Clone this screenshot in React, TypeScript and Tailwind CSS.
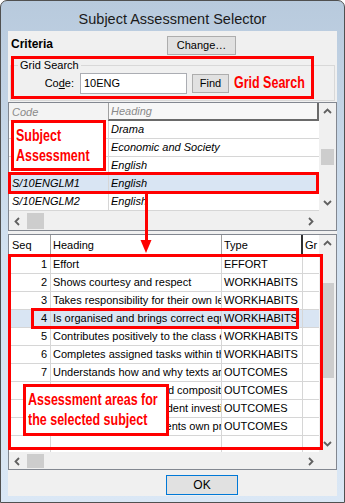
import React from "react";

type Dir = "up" | "down" | "left" | "right";
const Chev = ({ dir }: { dir: Dir }) => {
  const d = {
    up: "M1 6 L4.5 2.5 L8 6",
    down: "M1 3 L4.5 6.5 L8 3",
    left: "M6 1 L2.5 4.5 L6 8",
    right: "M3 1 L6.5 4.5 L3 8",
  }[dir];
  return (
    <svg width="9" height="9" viewBox="0 0 9 9">
      <path d={d} fill="none" stroke="#606060" strokeWidth="1.8" />
    </svg>
  );
};

const VScroll = ({ spacer, thumb }: { spacer: number; thumb: number }) => (
  <div className="w-[17px] flex flex-col bg-[#f0f0f0]">
    <div className="h-[17px] flex items-center justify-center">
      <Chev dir="up" />
    </div>
    <div style={{ height: spacer }} />
    <div className="mx-[2px] bg-[#cdcdcd]" style={{ height: thumb }} />
    <div className="flex-1" />
    <div className="h-[17px] flex items-center justify-center">
      <Chev dir="down" />
    </div>
  </div>
);

const HScroll = ({ h }: { h: number }) => (
  <div className="flex" style={{ height: h }}>
    <div className="w-[310px] flex bg-[#f0f0f0] border-t border-[#f0f0f0]">
      <div className="w-[17px] flex items-center justify-center">
        <Chev dir="left" />
      </div>
      <div className="w-[17px] my-[1px] ml-[1px] bg-[#cdcdcd]" />
      <div className="flex-1" />
      <div className="w-[17px] flex items-center justify-center">
        <Chev dir="right" />
      </div>
    </div>
    <div className="w-[17px] bg-[#f0f0f0]" />
  </div>
);

const upperRows = [
  ["", "Drama"],
  ["", "Economic and Society"],
  ["", "English"],
  ["S/10ENGLM1", "English"],
  ["S/10ENGLM2", "English"],
];

const lowerRows: [string, string, string][] = [
  ["1", "Effort", "EFFORT"],
  ["2", "Shows courtesy and respect", "WORKHABITS"],
  ["3", "Takes responsibility for their own learning", "WORKHABITS"],
  ["4", "Is organised and brings correct equipment", "WORKHABITS"],
  ["5", "Contributes positively to the class environment", "WORKHABITS"],
  ["6", "Completes assigned tasks within the set time", "WORKHABITS"],
  ["7", "Understands how and why texts are composed", "OUTCOMES"],
  ["8", "Produces well-structured compositions", "OUTCOMES"],
  ["9", "Undertakes an independent investigation", "OUTCOMES"],
  ["10", "Reflects on and documents own progress", "OUTCOMES"],
  ["", "", ""],
];

const redText =
  "font-['Liberation_Sans',Arial,sans-serif] font-bold text-[#ff0000] text-[16px] leading-[20px] whitespace-nowrap origin-left scale-x-[0.78]";

export default function App() {
  return (
    <div className="relative w-[345px] h-[503px] font-['Liberation_Sans',Arial,sans-serif] text-black">
      <div className="w-full h-full flex flex-col border border-[#505050] rounded-t-[7px] bg-gradient-to-b from-[#b8cadd] via-[#d2e1f0] to-[#dae7f5] overflow-hidden">
        {/* Title */}
        <div className="h-[30px] flex items-start justify-center pt-[10px] text-[14.5px] leading-[17px] text-[#1a1a1a]">
          Subject Assessment Selector
        </div>
        {/* Client */}
        <div className="mx-[7px] h-[465px] bg-[#f0f0f0] flex flex-col">
          {/* Criteria row */}
          <div className="h-[24px] flex items-start pt-[5px]">
            <div className="w-[159px] pl-[3px] h-[15px] flex items-center text-[12px] font-bold">
              Criteria
            </div>
            <button className="w-[69px] h-[19px] border border-[#adadad] bg-[#e1e1e1] text-[11px] flex items-center justify-center">
              Change…
            </button>
          </div>
          {/* Grid search group */}
          <fieldset className="mt-[3px] mx-[2px] h-[43px] border border-[#d8d8d8] px-0">
            <legend className="ml-[7px] px-[2px] text-[11px] leading-[14px]">Grid Search</legend>
            <div className="flex items-center h-[21px] mt-[1px]">
              <div className="w-[63px] text-right text-[11px]">
                Co<span className="underline">d</span>e:
              </div>
              <div className="ml-[6px] w-[107px] h-[21px] border border-[#abadb3] bg-white text-[11px] flex items-center pl-[3px]">
                10ENG
              </div>
              <button className="ml-[5px] w-[37px] h-[19px] border border-[#adadad] bg-[#e1e1e1] text-[11px] flex items-center justify-center">
                Find
              </button>
            </div>
          </fieldset>
          {/* Upper grid */}
          <div className="mt-[1px] h-[129px] border border-[#828790] bg-white flex flex-col">
            <div className="flex h-[108px]">
              <div className="w-[310px] flex flex-col">
                <div className="h-[18px] flex bg-[#f3f3f3] text-[11px] italic text-[#8a8a8a]">
                  <div className="w-[99px] pl-[3px] flex items-center">Code</div>
                  <div className="flex-1 flex items-center pl-[2px] border-l border-[#a0a0a0] border-r-2 border-b-2 border-r-[#6a6a6a] border-b-[#6a6a6a] bg-[#f7f7f7]">
                    Heading
                  </div>
                </div>
                {upperRows.map(([c, h], i) => (
                  <div
                    key={i}
                    className={`h-[18px] flex text-[11px] italic border-b border-[#d6d6d6] ${
                      i === 3 ? "bg-[#d9e5f3]" : ""
                    }`}
                  >
                    <div className="w-[100px] pl-[3px] flex items-center border-r border-[#d6d6d6] whitespace-nowrap overflow-hidden">
                      {c}
                    </div>
                    <div className="flex-1 pl-[2px] flex items-center whitespace-nowrap overflow-hidden">
                      {h}
                    </div>
                  </div>
                ))}
              </div>
              <VScroll spacer={29} thumb={16} />
            </div>
            <HScroll h={19} />
          </div>
          {/* Lower grid */}
          <div className="mt-[3px] h-[236px] border border-[#828790] bg-white flex flex-col">
            <div className="flex h-[217px]">
              <div className="w-[310px] flex flex-col">
                <div className="h-[21px] flex text-[11px] bg-white border-b border-[#e5e5e5]">
                  <div className="w-[42px] pl-[3px] flex items-center border-r border-[#a0a0a0]">Seq</div>
                  <div className="w-[171px] pl-[2px] flex items-center border-r border-[#a0a0a0]">Heading</div>
                  <div className="w-[81px] pl-[2px] flex items-center border-r-2 border-[#303030]">Type</div>
                  <div className="flex-1 pl-[2px] flex items-center overflow-hidden whitespace-nowrap">Gr</div>
                </div>
                <div className="h-[196px] overflow-hidden">
                  {lowerRows.map(([s, h, t], i) => (
                    <div
                      key={i}
                      className={`h-[18px] flex text-[11px] border-b border-[#d6d6d6] ${
                        i === 3 ? "bg-[#d9e5f3]" : ""
                      }`}
                    >
                      <div className="w-[42px] pr-[3px] flex items-center justify-end border-r border-[#d6d6d6]">
                        {s}
                      </div>
                      <div className="w-[171px] pl-[2px] flex items-center border-r border-[#d6d6d6] whitespace-nowrap overflow-hidden">
                        {h}
                      </div>
                      <div className="w-[81px] pl-[2px] flex items-center border-r border-[#d6d6d6] whitespace-nowrap overflow-hidden">
                        {t}
                      </div>
                      <div className="flex-1" />
                    </div>
                  ))}
                </div>
              </div>
              <VScroll spacer={31} thumb={95} />
            </div>
            <HScroll h={17} />
          </div>
          {/* OK */}
          <div className="mt-[5px] flex pl-[158px]">
            <button className="w-[72px] h-[20px] border border-[#0078d7] bg-[#e1e1e1] text-[12px] flex items-center justify-center">
              OK
            </button>
          </div>
        </div>
      </div>

      {/* Annotations */}
      <div className="absolute left-[11px] top-[56px] w-[303px] h-[43px] border-[3px] border-[#ff0000]" />
      <div className={`absolute left-[234px] top-[73px] ${redText}`}>Grid Search</div>

      <div className="absolute left-[11px] top-[120px] w-[95px] h-[51px] border-[3px] border-[#ff0000] bg-white pl-[2px] pt-[3px]">
        <div className={redText}>Subject</div>
        <div className={redText}>Assessment</div>
      </div>

      <div className="absolute left-[8px] top-[172px] w-[311px] h-[22px] border-[3px] border-[#ff0000]" />

      <svg className="absolute left-[138px] top-[193px]" width="16" height="61" viewBox="0 0 16 61">
        <rect x="7" y="0" width="3" height="48" fill="#ff0000" />
        <polygon points="2.5,47 13.5,47 8,60" fill="#ff0000" />
      </svg>

      <div className="absolute left-[8px] top-[254px] w-[315px] h-[196px] border-[3px] border-[#ff0000]" />
      <div className="absolute left-[31px] top-[308px] w-[268px] h-[21px] border-[3px] border-[#ff0000]" />

      <div className="absolute left-[23px] top-[384px] w-[146px] h-[52px] border-[3px] border-[#ff0000] bg-white pl-[2px] pt-[3px]">
        <div className={redText}>Assessment areas for</div>
        <div className={redText}>the selected subject</div>
      </div>
    </div>
  );
}
